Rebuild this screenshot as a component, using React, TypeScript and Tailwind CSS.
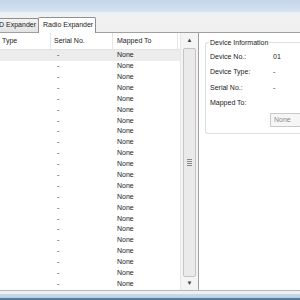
import React from "react";

const rows = Array.from({ length: 22 });

export default function App() {
  const font = { fontFamily: '"Liberation Sans", Arial, sans-serif' };
  return (
    <div className="w-[300px] h-[300px] overflow-hidden flex flex-col bg-[#f0f0f0] text-[7px] text-[#1a1a1a] whitespace-nowrap" style={font}>
      <div className="h-[12px] shrink-0 bg-gradient-to-b from-[#c3d6ea] to-[#d6e3f1]" />
      <div className="h-[5px] shrink-0 bg-[#eef1f5]" />
      <div className="h-[16px] shrink-0 flex items-end border-b border-[#a0a0a0] bg-[#f0f0f0]">
        <div className="-ml-[4px] h-[14px] w-[43px] border border-b-0 border-[#8e8f8f] bg-gradient-to-b from-[#f3f3f3] to-[#e3e3e3] flex items-center justify-end pr-[2px] rounded-t-[2px]">
          D Expander
        </div>
        <div className="h-[16px] w-[58px] -ml-[1px] -mb-[1px] border border-b-0 border-[#8e8f8f] bg-white flex items-center pl-[4px] rounded-t-[2px]">
          Radio Expander
        </div>
      </div>
      <div className="flex flex-1 bg-white min-h-0">
        <div className="w-[199px] flex border-r border-[#a0a0a0]">
          <div className="w-[180px] flex flex-col">
            <div className="h-[17px] flex items-center border-b border-[#e0e3e8] shrink-0">
              <div className="w-[51px] pl-[2px] border-r border-[#e3e6ea] h-full flex items-center">Type</div>
              <div className="w-[62px] pl-[3px] border-r border-[#e3e6ea] h-full flex items-center">Serial No.</div>
              <div className="w-[65px] pl-[4px] border-r border-[#e3e6ea] h-full flex items-center">Mapped To</div>
            </div>
            {rows.map((_, i) => (
              <div key={i} className={`h-[10.9px] flex items-center shrink-0 ${i === 0 ? "bg-[#ececec]" : ""}`}>
                <div className="w-[51px]" />
                <div className="w-[62px] pl-[6px]">-</div>
                <div className="w-[65px] pl-[4px]">None</div>
              </div>
            ))}
          </div>
          <div className="w-[18px] flex flex-col bg-[#f4f4f4] border-l border-[#e6e6e6]">
            <div className="h-[15px] flex items-center justify-center text-[6px] text-[#404040]">▲</div>
            <div className="flex-1 mx-[2px] border border-[#c4c4c4] rounded-[2px] bg-[#eaeaea] flex items-center justify-center">
              <div className="flex flex-col gap-[1px]">
                <div className="w-[5px] h-[1px] bg-[#8a8a8a]" />
                <div className="w-[5px] h-[1px] bg-[#8a8a8a]" />
                <div className="w-[5px] h-[1px] bg-[#8a8a8a]" />
                <div className="w-[5px] h-[1px] bg-[#8a8a8a]" />
              </div>
            </div>
            <div className="h-[13px] flex items-center justify-center text-[6px] text-[#404040]">▼</div>
          </div>
        </div>
        <div className="flex-1 pl-[6px] pt-[9px]">
          <div className="h-[92px] border border-r-0 border-[#d5dfe5] rounded-l-[3px] relative pt-[6px] pl-[4px]">
            <div className="absolute -top-[5px] left-[3px] bg-white px-[1px]">Device Information</div>
            <div className="flex h-[15.5px] items-center"><div className="w-[63px]">Device No.:</div><div>01</div></div>
            <div className="flex h-[15.5px] items-center"><div className="w-[63px]">Device Type:</div><div>-</div></div>
            <div className="flex h-[15.5px] items-center"><div className="w-[63px]">Serial No.:</div><div>-</div></div>
            <div className="flex h-[15.5px] items-center"><div className="w-[63px]">Mapped To:</div></div>
            <div className="flex mt-[2px]">
              <div className="ml-[60px] h-[14px] w-[40px] border border-[#c9c9c9] bg-[#f6f6f6] text-[#8a8a8a] pl-[3px] flex items-center">None</div>
            </div>
          </div>
        </div>
      </div>
      <div className="h-[4px] shrink-0 bg-[#f0f0f0] border-t border-[#b5b5b5]" />
      <div className="h-[6px] shrink-0 bg-gradient-to-b from-[#c8dbed] to-[#b7cfe6] border-b-[2px] border-[#5b7c99]" />
    </div>
  );
}
